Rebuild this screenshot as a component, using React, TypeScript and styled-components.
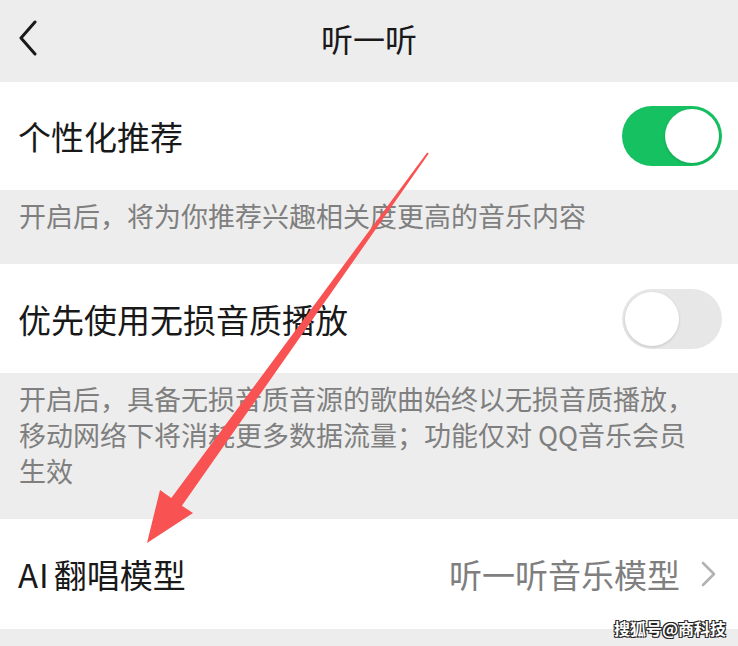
import React from "react";
import styled, { createGlobalStyle } from "styled-components";

const GlobalStyle = createGlobalStyle`
	html, body {
		margin: 0;
		padding: 0;
		background: #ededed;
	}
	body {
		font-family: "Noto Sans CJK SC", "Noto Sans", sans-serif;
	}
`;

const App: React.FC = () => {
	return (
		<>
			<GlobalStyle />
			<Page>
				<Header>
					<BackButton aria-label="返回">
						<svg width="20" height="36" viewBox="0 0 20 36">
							<polyline points="17,2 3,18 17,34" fill="none" stroke="#191919" strokeWidth="3" strokeLinecap="round" strokeLinejoin="round" />
						</svg>
					</BackButton>
					<Title>听一听</Title>
					<span />
				</Header>

				<Row $height={108} $padRight={16}>
					<Label>个性化推荐</Label>
					<Switch $on>
						<Knob />
					</Switch>
				</Row>
				<Hint>开启后，将为你推荐兴趣相关度更高的音乐内容</Hint>

				<Row $height={109} $padRight={16}>
					<Label>优先使用无损音质播放</Label>
					<Switch $on={false}>
						<Knob />
					</Switch>
				</Row>
				<Hint>开启后，具备无损音质音源的歌曲始终以无损音质播放，移动网络下将消耗更多数据流量；功能仅对 QQ音乐会员生效</Hint>

				<Row $height={110} $padRight={21}>
					<Label>
						<Latin>AI</Latin>翻唱模型
					</Label>
					<Value>
						听一听音乐模型
						<svg width="16" height="26" viewBox="0 0 16 26">
							<polyline points="2,2 13,13 2,24" fill="none" stroke="#b2b2b2" strokeWidth="2.6" strokeLinecap="round" strokeLinejoin="round" />
						</svg>
					</Value>
				</Row>

				<Arrow viewBox="0 0 738 646">
					<polygon
						points="427.2,152.4 428.8,153.6 181.9,505.7 193,513 147,543 160,490 171.3,498.1"
						fill="#f85252"
					/>
				</Arrow>
				<Watermark>搜狐号@商科技</Watermark>
			</Page>
		</>
	);
};

const Page = styled.div`
	position: relative;
	width: 738px;
	height: 646px;
	overflow: hidden;
	background: #ededed;
	display: flex;
	flex-direction: column;
`;

const Header = styled.div`
	height: 82px;
	flex-shrink: 0;
	display: grid;
	grid-template-columns: 80px 1fr 80px;
	align-items: center;
	padding-bottom: 7px;
	box-sizing: border-box;
`;

const BackButton = styled.div`
	display: flex;
	align-items: center;
	padding-left: 18px;
	height: 36px;
`;

const Title = styled.div`
	text-align: center;
	font-size: 32px;
	line-height: 40px;
	color: #191919;
`;

const Row = styled.div<{ $height: number; $padRight: number }>`
	height: ${(p) => p.$height}px;
	flex-shrink: 0;
	box-sizing: border-box;
	background: #ffffff;
	display: flex;
	align-items: center;
	justify-content: space-between;
	padding: 0 ${(p) => p.$padRight}px 0 18px;
`;

const Label = styled.div`
	font-size: 33px;
	line-height: 44px;
	color: #191919;
`;

const Latin = styled.span`
	letter-spacing: 1px;
	margin-right: 4px;
`;

const Value = styled.div`
	display: flex;
	align-items: center;
	gap: 21px;
	font-size: 33px;
	line-height: 44px;
	color: #7f7f7f;
`;

const Hint = styled.div`
	flex-shrink: 0;
	padding: 8px 28px 30px 19px;
	font-size: 27px;
	line-height: 36px;
	color: #7f7f7f;
`;

const Switch = styled.div<{ $on: boolean }>`
	width: 100px;
	height: 60px;
	box-sizing: border-box;
	border-radius: 30px;
	padding: 3px;
	display: flex;
	justify-content: ${(p) => (p.$on ? "flex-end" : "flex-start")};
	background: ${(p) => (p.$on ? "#15c160" : "#e7e7e7")};
`;

const Knob = styled.div`
	width: 54px;
	height: 54px;
	border-radius: 50%;
	background: #ffffff;
	box-shadow: 0 1px 3px rgba(0, 0, 0, 0.15);
`;

const Arrow = styled.svg`
	position: absolute;
	top: 0;
	left: 0;
	width: 738px;
	height: 646px;
	pointer-events: none;
`;

const Watermark = styled.div`
	position: absolute;
	right: 12px;
	bottom: 6px;
	font-size: 16px;
	font-weight: 700;
	color: #ffffff;
	text-shadow: -1px -1px 0 #222, 1px -1px 0 #222, -1px 1px 0 #222, 1px 1px 0 #222;
`;

export default App;
